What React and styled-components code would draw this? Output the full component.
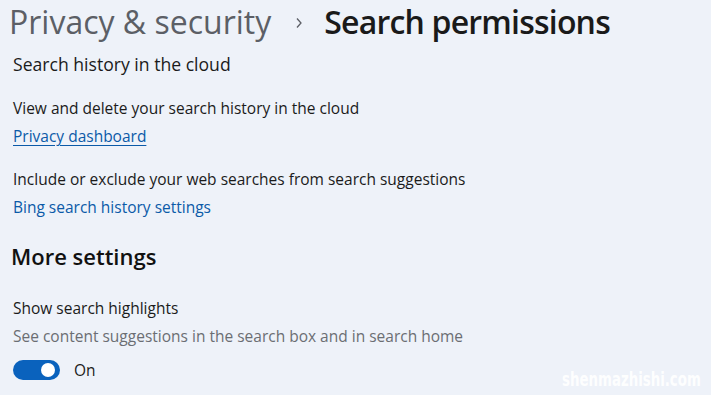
import * as React from 'react'
import styled, { createGlobalStyle } from 'styled-components'

const Global = createGlobalStyle`
  html, body {
    margin: 0;
    padding: 0;
    background: #eef2f9;
  }
  body {
    font-family: "Open Sans", "Noto Sans", sans-serif;
    color: #1b1b1b;
  }
`

const Page = styled.div`
  position: relative;
  width: 711px;
  height: 395px;
  overflow: hidden;
  background: #eef2f9;
  padding: 0 0 0 13px;
  box-sizing: border-box;
`

const Breadcrumb = styled.div`
  display: flex;
  align-items: center;
  height: 44px;
  margin-left: -4px;
  font-size: 32px;
  line-height: 44px;
`

const Crumb = styled.span`
  color: ${p => (p.current ? '#1a1a1a' : '#5c5f66')};
  font-weight: ${p => (p.current ? 600 : 400)};
  letter-spacing: ${p => (p.current ? -0.8 : 0)}px;
  white-space: nowrap;
`

const Chevron = styled.span`
  display: flex;
  align-items: center;
  margin: 2px 21px 0 24px;
`

const Section = styled.div`
  display: flex;
  flex-direction: column;
  margin-top: ${p => p.gap || 0}px;
`

const Label = styled.div`
  font-size: ${p => (p.large ? 17.6 : 15.5)}px;
  line-height: 28px;
  color: ${p => (p.muted ? '#6b6e73' : '#1b1b1b')};
`

const Link = styled.a`
  font-size: 15.5px;
  line-height: 28px;
  color: #0b5aa8;
  text-decoration: ${p => (p.underline ? 'underline' : 'none')};
  text-underline-offset: 3px;
  text-decoration-thickness: 1px;
  align-self: flex-start;
`

const Heading = styled.h2`
  margin: 0 0 0 -2px;
  font-size: 22px;
  font-weight: 600;
  line-height: 34px;
  color: #111;
`

const ToggleRow = styled.div`
  display: flex;
  align-items: center;
  gap: 14px;
  height: 30px;
  margin-top: 5px;
`

const Track = styled.div`
  width: 47px;
  height: 20px;
  border-radius: 10px;
  background: #0a62bd;
  display: flex;
  align-items: center;
  justify-content: flex-end;
  padding-right: 5px;
  box-sizing: border-box;
`

const Knob = styled.div`
  width: 14px;
  height: 14px;
  border-radius: 50%;
  background: #fff;
`

const Watermark = styled.div`
  position: absolute;
  right: 10px;
  bottom: 5px;
  font-family: "DejaVu Sans Condensed", "Liberation Sans Narrow", sans-serif;
  font-weight: 700;
  font-size: 19px;
  color: rgba(255, 255, 255, 0.95);
  transform: scaleX(0.78);
  transform-origin: right center;
`

export default function App() {
  return (
    <Page>
      <Global />
      <Breadcrumb>
        <Crumb>Privacy &amp; security</Crumb>
        <Chevron>
          <svg width="8" height="12" viewBox="0 0 8 12">
            <path d="M2 1.5 L6 6 L2 10.5" fill="none" stroke="#5c5f66" strokeWidth="1.3" />
          </svg>
        </Chevron>
        <Crumb current>Search permissions</Crumb>
      </Breadcrumb>
      <Section gap={6}>
        <Label large>Search history in the cloud</Label>
      </Section>
      <Section gap={16}>
        <Label>View and delete your search history in the cloud</Label>
        <Link underline href="#">Privacy dashboard</Link>
      </Section>
      <Section gap={15}>
        <Label>Include or exclude your web searches from search suggestions</Label>
        <Link href="#">Bing search history settings</Link>
      </Section>
      <Section gap={18}>
        <Heading>More settings</Heading>
      </Section>
      <Section gap={21}>
        <Label>Show search highlights</Label>
        <Label muted>See content suggestions in the search box and in search home</Label>
        <ToggleRow>
          <Track><Knob /></Track>
          <Label>On</Label>
        </ToggleRow>
      </Section>
      <Watermark>shenmazhishi.com</Watermark>
    </Page>
  )
}
